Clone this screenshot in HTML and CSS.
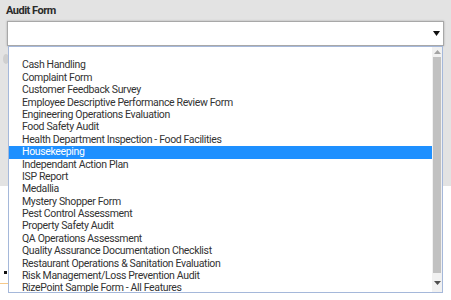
FILE: index.html
```html
<!DOCTYPE html>
<html>
<head>
<meta charset="utf-8">
<link rel="stylesheet" href="styles.css">
</head>
<body>
<div class="panel">
  <div class="label">Audit Form</div>
  <div class="field">
    <div class="select">
      <svg class="caret" width="7" height="5" viewBox="0 0 7 5"><path d="M0 0H7L3.5 5Z" fill="#111"/></svg>
    </div>
    <div class="dropdown">
      <ul class="options">
        <li>&nbsp;</li>
        <li>Cash Handling</li>
        <li>Complaint Form</li>
        <li>Customer Feedback Survey</li>
        <li>Employee Descriptive Performance Review Form</li>
        <li>Engineering Operations Evaluation</li>
        <li>Food Safety Audit</li>
        <li>Health Department Inspection - Food Facilities</li>
        <li class="sel">Housekeeping</li>
        <li>Independant Action Plan</li>
        <li>ISP Report</li>
        <li>Medallia</li>
        <li>Mystery Shopper Form</li>
        <li>Pest Control Assessment</li>
        <li>Property Safety Audit</li>
        <li>QA Operations Assessment</li>
        <li>Quality Assurance Documentation Checklist</li>
        <li>Restaurant Operations &amp; Sanitation Evaluation</li>
        <li>Risk Management/Loss Prevention Audit</li>
        <li>RizePoint Sample Form - All Features</li>
      </ul>
      <div class="scrollbar">
        <div class="sb-btn"><svg width="7" height="4" viewBox="0 0 7 4"><path d="M0 4H7L3.5 0Z" fill="#a3a3a3"/></svg></div>
        <div class="sb-track"><div class="sb-thumb"></div></div>
        <div class="sb-btn down"><svg width="7" height="4" viewBox="0 0 7 4"><path d="M0 0H7L3.5 4Z" fill="#505050"/></svg></div>
      </div>
    </div>
  </div>
  <div class="radio"></div>
</div>
<div class="lower">
  <div class="row"></div>
  <div class="row dot-row"><span class="dot"></span></div>
</div>
</body>
</html>
```
FILE: styles.css
```css
html, body {
  margin: 0;
  padding: 0;
}
body {
  width: 451px;
  height: 300px;
  overflow: hidden;
  background: #ffffff;
  font-family: Roboto, "Liberation Sans", Arial, sans-serif;
  color: #333;
}
.panel {
  height: 186px;
  background: #e3e3e3;
  padding: 4px 0 0 6px;
  box-sizing: border-box;
  position: relative;
}
.label {
  font-size: 11px;
  font-weight: bold;
  letter-spacing: -0.5px;
  color: #2b2b2b;
  height: 17px;
  line-height: 13px;
}
.field {
  position: relative;
  width: 437px;
  margin-left: 1px;
}
.select {
  height: 23px;
  background: #fff;
  border: 1px solid #a8a8a8;
  box-shadow: 0 0 2px rgba(0,0,0,0.25);
  display: flex;
  justify-content: flex-end;
  align-items: center;
  padding-right: 3px;
}
.caret {
  display: block;
}
.dropdown {
  position: absolute;
  left: 1px;
  top: 25px;
  width: 433px;
  height: 245px;
  background: #fff;
  border: 1px solid #a5b8da;
  display: flex;
  z-index: 5;
  overflow: hidden;
}
.options {
  list-style: none;
  margin: 0;
  padding: 0;
  flex: 1;
  font-size: 10.5px;
  letter-spacing: -0.35px;
  color: #333;
}
.options li {
  height: 12.4px;
  line-height: 12.4px;
  padding-left: 13px;
  white-space: nowrap;
}
.options li.sel {
  background: #1e90ff;
  color: #fff;
}
.scrollbar {
  width: 10px;
  background: #f1f1f1;
  display: flex;
  flex-direction: column;
}
.sb-btn {
  height: 10px;
  display: flex;
  align-items: center;
  justify-content: center;
}
.sb-btn.down {
  height: 19px;
}
.sb-track {
  flex: 1;
  padding: 0 1px;
}
.sb-thumb {
  height: 100%;
  background: #c1c1c1;
}
.radio {
  position: absolute;
  left: 3px;
  top: 54px;
  width: 6px;
  height: 10px;
  border-radius: 50%;
  background: #cfcfcf;
}
.lower {
  padding-top: 75px;
}
.row {
  height: 22px;
  border-bottom: 1px solid #f6c98a;
  width: 10px;
}
.dot-row {
  position: relative;
}
.dot {
  position: absolute;
  left: 4px;
  top: -13px;
  width: 3px;
  height: 3px;
  background: #111;
}
```
